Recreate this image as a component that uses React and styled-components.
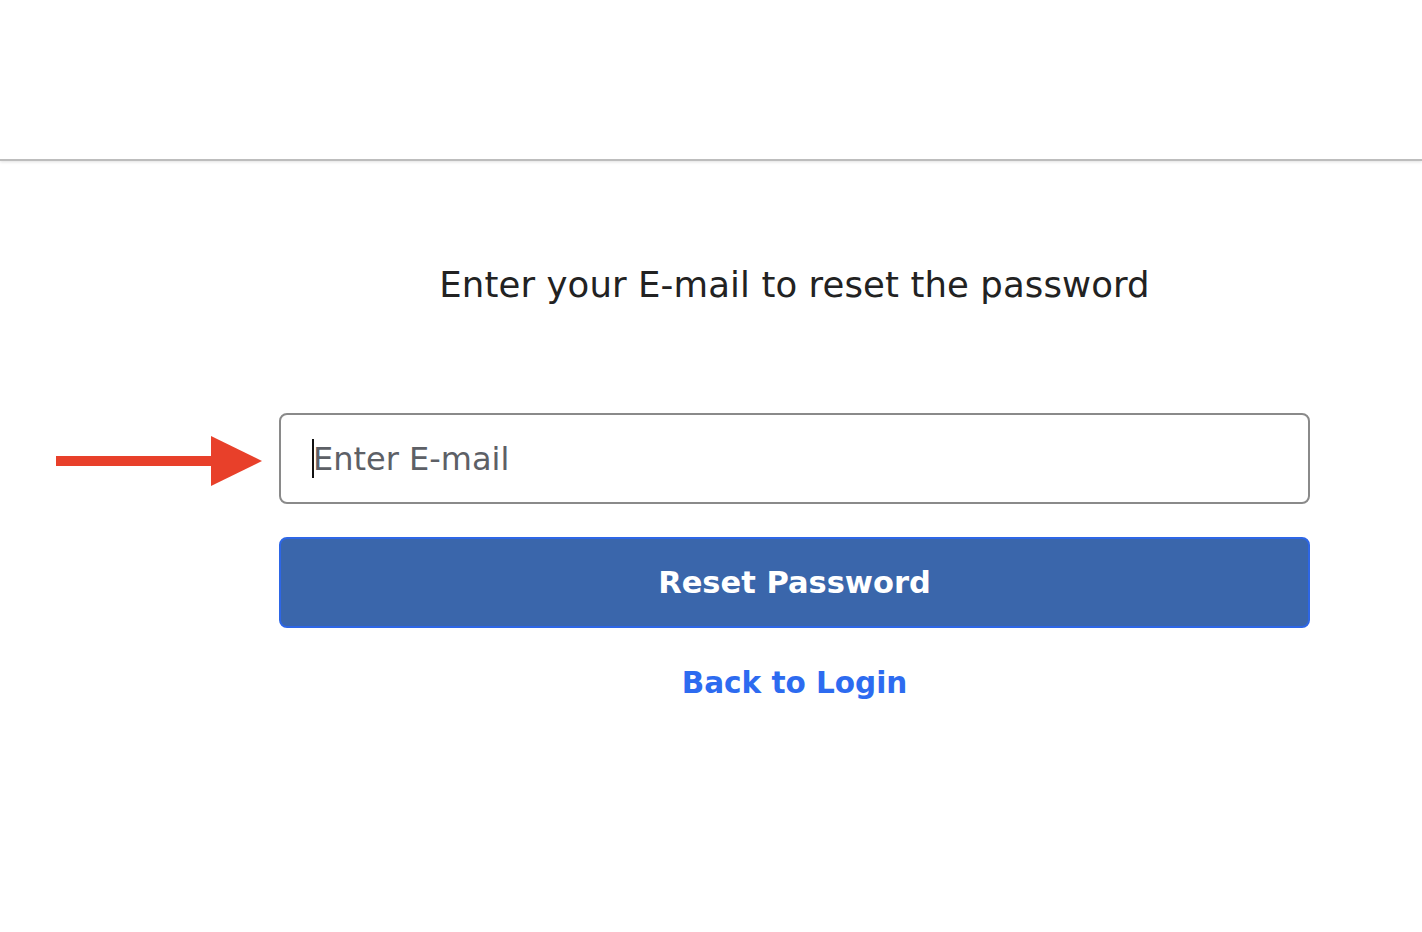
import React from 'react'
import styled, { createGlobalStyle } from 'styled-components'

const GlobalStyle = createGlobalStyle`
  html, body { margin: 0; padding: 0; background: #fff; }
  body { font-family: "DejaVu Sans", "Open Sans", sans-serif; }
`

const Page = styled.div`
  min-height: 932px;
  display: flex;
  flex-direction: column;
`

const TopBar = styled.header`
  height: 159px;
  border-bottom: 2px solid #bdbdbd;
  box-shadow: 0 1px 3px rgba(0, 0, 0, 0.12);
`

const Body = styled.main`
  display: flex;
  padding-top: 100px;
`

const Gutter = styled.div`
  width: 279px;
  flex-shrink: 0;
  padding-top: 174px;
`

const Column = styled.section`
  width: 1031px;
  display: flex;
  flex-direction: column;
  align-items: center;
`

const Title = styled.h1`
  margin: 0;
  font-weight: 400;
  font-size: 35.5px;
  letter-spacing: 0.1px;
  color: #222;
  line-height: 48px;
`

const Field = styled.div`
  position: relative;
  width: 100%;
  margin-top: 104px;
`

const Input = styled.input`
  box-sizing: border-box;
  width: 100%;
  height: 91px;
  border: 2px solid #8a8a8a;
  border-radius: 8px;
  padding: 0 32px;
  font: inherit;
  font-size: 32px;
  color: #333;
  outline: none;
  &::placeholder { color: #5d6066; }
`

const Caret = styled.span`
  position: absolute;
  left: 33px;
  top: 26px;
  width: 2px;
  height: 39px;
  background: #111;
`

const Button = styled.button`
  box-sizing: border-box;
  width: 100%;
  height: 91px;
  margin-top: 33px;
  background: #3a66ab;
  border: 2px solid #2d66e6;
  border-radius: 8px;
  color: #fff;
  font: inherit;
  font-weight: 700;
  font-size: 30.5px;
  cursor: pointer;
`

const BackLink = styled.a`
  margin-top: 38px;
  color: #2d6bf0;
  font-weight: 700;
  font-size: 29.5px;
  text-decoration: none;
  cursor: pointer;
`

const Arrow = () => (
  <svg width="279" height="52" viewBox="0 0 279 52">
    <rect x="56" y="21" width="160" height="10" fill="#e8402a" />
    <polygon points="211,1 262,26 211,51" fill="#e8402a" />
  </svg>
)

export default function App() {
  return (
    <>
      <GlobalStyle />
      <Page>
        <TopBar />
        <Body>
          <Gutter>
            <Arrow />
          </Gutter>
          <Column>
            <Title>Enter your E-mail to reset the password</Title>
            <Field>
              <Input type="email" placeholder="Enter E-mail" />
              <Caret />
            </Field>
            <Button>Reset Password</Button>
            <BackLink>Back to Login</BackLink>
          </Column>
        </Body>
      </Page>
    </>
  )
}
